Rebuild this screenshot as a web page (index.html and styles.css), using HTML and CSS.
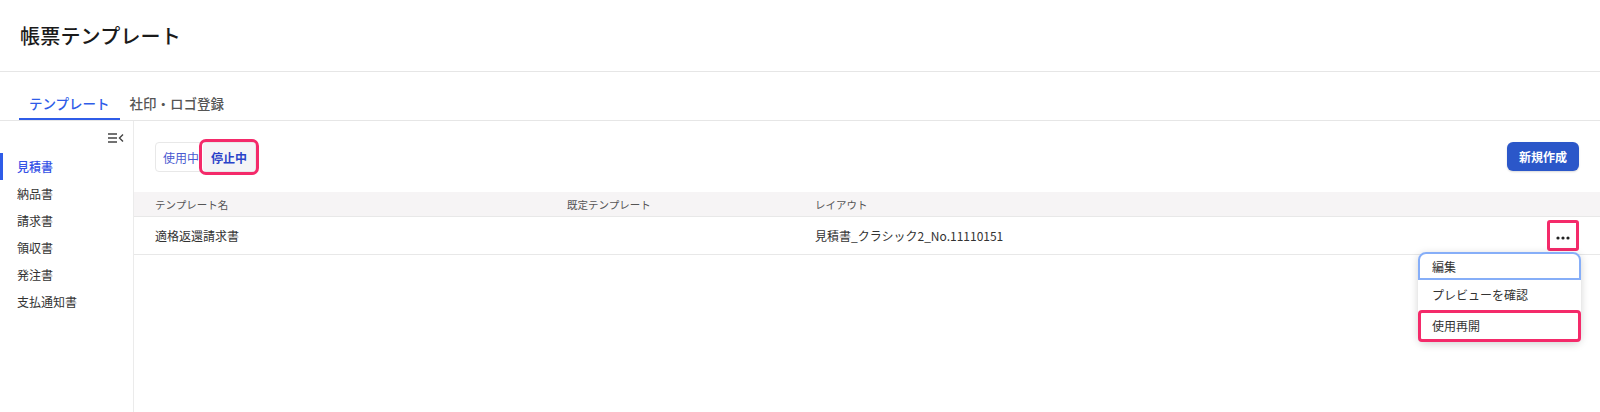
FILE: index.html
```html
<!DOCTYPE html>
<html lang="ja">
<head>
<meta charset="utf-8">
<title>帳票テンプレート</title>
<link rel="stylesheet" href="styles.css">
</head>
<body>
<header class="page-header">
  <h1 class="page-title">帳票テンプレート</h1>
</header>
<nav class="tabs">
  <a class="tab tab-active">テンプレート</a>
  <a class="tab">社印・ロゴ登録</a>
</nav>
<div class="main">
  <aside class="sidebar">
    <div class="collapse-row">
      <svg class="collapse-icon" width="16" height="10" viewBox="0 0 16 10">
        <path d="M0 1H9M0 5H9M0 9H9" stroke="#444" stroke-width="1.4" fill="none"/>
        <path d="M15 1.5L11.5 5L15 8.5" stroke="#444" stroke-width="1.4" fill="none"/>
      </svg>
    </div>
    <ul class="side-nav">
      <li class="side-item side-active">見積書</li>
      <li class="side-item">納品書</li>
      <li class="side-item">請求書</li>
      <li class="side-item">領収書</li>
      <li class="side-item">発注書</li>
      <li class="side-item">支払通知書</li>
    </ul>
  </aside>
  <section class="content">
    <div class="toolbar">
      <div class="segmented">
        <button class="seg seg-first">使用中</button>
        <button class="seg seg-active mark">停止中</button>
      </div>
      <button class="primary">新規作成</button>
    </div>
    <div class="table">
      <div class="row head">
        <div class="cell">テンプレート名</div>
        <div class="cell">既定テンプレート</div>
        <div class="cell">レイアウト</div>
        <div class="cell"></div>
      </div>
      <div class="row body">
        <div class="cell">適格返還請求書</div>
        <div class="cell"></div>
        <div class="cell">見積書_クラシック2_No.11110151</div>
        <div class="cell actions">
          <button class="more mark">
            <svg width="14" height="4" viewBox="0 0 14 4"><circle cx="2" cy="2" r="1.6" fill="#222"/><circle cx="7" cy="2" r="1.6" fill="#222"/><circle cx="12" cy="2" r="1.6" fill="#222"/></svg>
          </button>
          <ul class="menu">
            <li class="menu-item menu-focus">編集</li>
            <li class="menu-item">プレビューを確認</li>
            <li class="menu-item mark-menu">使用再開</li>
          </ul>
        </div>
      </div>
    </div>
  </section>
</div>
</body>
</html>
```
FILE: styles.css
```css
* { box-sizing: border-box; }
html, body { margin: 0; padding: 0; }
body {
  font-family: "Noto Sans CJK JP", "Noto Sans", sans-serif;
  color: #222;
  background: #fff;
  width: 1600px;
  height: 412px;
  overflow: hidden;
}
.page-header {
  height: 72px;
  border-bottom: 1px solid #e6e6e6;
  display: flex;
  align-items: center;
  padding-left: 20px;
}
.page-title {
  margin: 0;
  font-size: 20px;
  font-weight: 500;
  color: #1a1a1a;
  letter-spacing: 0.2px;
}
.tabs {
  height: 49px;
  display: flex;
  align-items: flex-end;
  padding-left: 19px;
  border-bottom: 1px solid #e6e6e6;
}
.tab {
  padding: 0 10px 5px;
  font-size: 13.5px;
  font-weight: 500;
  color: #555;
  border-bottom: 2px solid transparent;
  line-height: 20px;
}
.tab-active {
  color: #2f5ce8;
  border-bottom-color: #2f5ce8;
}
.main {
  display: flex;
  height: 291px;
}
.sidebar {
  width: 134px;
  border-right: 1px solid #ebebeb;
  flex-shrink: 0;
}
.collapse-row {
  display: flex;
  justify-content: flex-end;
  padding: 12px 9px 0 0;
  height: 32px;
}
.side-nav {
  list-style: none;
  margin: 0;
  padding: 0;
}
.side-item {
  height: 27px;
  line-height: 27px;
  font-size: 12px;
  color: #333;
  padding-left: 14px;
  border-left: 3px solid transparent;
}
.side-active {
  color: #3552e6;
  border-left-color: #2f5ce8;
  font-weight: 500;
}
.content {
  flex: 1;
  position: relative;
}
.toolbar {
  display: flex;
  justify-content: space-between;
  align-items: flex-start;
  padding: 21px 21px 0 21px;
  height: 71px;
}
.segmented {
  display: flex;
  height: 30px;
  border: 1px solid #e8e8e8;
  border-radius: 4px;
  background: #fff;
}
.seg {
  border: 0;
  background: transparent;
  font-family: inherit;
  font-size: 12px;
  color: #4a5ad0;
  height: 28px;
  cursor: pointer;
}
.seg-first {
  padding: 0 4px 0 7px;
}
.seg-active {
  background: #f4f4f6;
  color: #2942c9;
  font-weight: 600;
  padding: 0 8px;
}
.mark {
  outline: 3px solid #f42a6a;
  border-radius: 3px;
}
.seg.mark { outline-offset: 1px; }
.primary {
  width: 72px;
  height: 29px;
  border: 0;
  border-radius: 6px;
  background: #2b57c9;
  color: #fff;
  font-family: inherit;
  font-size: 12px;
  font-weight: 700;
  box-shadow: 0 1px 2px rgba(0,0,0,0.15);
}
.table {
  width: 100%;
}
.row {
  display: grid;
  grid-template-columns: 412px 248px 1fr 60px;
  align-items: center;
}
.head {
  height: 25px;
  background: #f6f4f5;
  border-bottom: 1px solid #e8e8e8;
  font-size: 10.5px;
  color: #555;
}
.body {
  height: 38px;
  border-bottom: 1px solid #e8e8e8;
  font-size: 12px;
  color: #333;
}
.cell {
  padding-left: 21px;
  white-space: nowrap;
}
.actions {
  position: relative;
  display: flex;
  justify-content: flex-end;
  padding-right: 21px;
  padding-left: 0;
  height: 100%;
  align-items: flex-start;
}
.more {
  margin-top: 3px;
  width: 32px;
  height: 31px;
  border: 0;
  background: #fff;
  display: flex;
  align-items: center;
  justify-content: center;
  padding: 4px 0 0;
}
.more.mark { outline-offset: -3px; }
.menu {
  position: absolute;
  top: 35px;
  right: 19px;
  width: 163px;
  list-style: none;
  margin: 0;
  padding: 0;
  background: #fff;
  border-radius: 8px;
  box-shadow: 0 2px 8px rgba(0,0,0,0.18);
  z-index: 5;
}
.menu-item {
  height: 30px;
  line-height: 30px;
  padding-left: 14px;
  font-size: 12px;
  color: #333;
}
.menu-focus {
  height: 28px;
  line-height: 26px;
  border: 2px solid #86aef8;
  border-radius: 8px 8px 0 0;
  padding-left: 12px;
}
.mark-menu {
  height: 32px;
  line-height: 26px;
  border: 3px solid #f42a6a;
  border-radius: 4px;
  padding-left: 11px;
}
```
